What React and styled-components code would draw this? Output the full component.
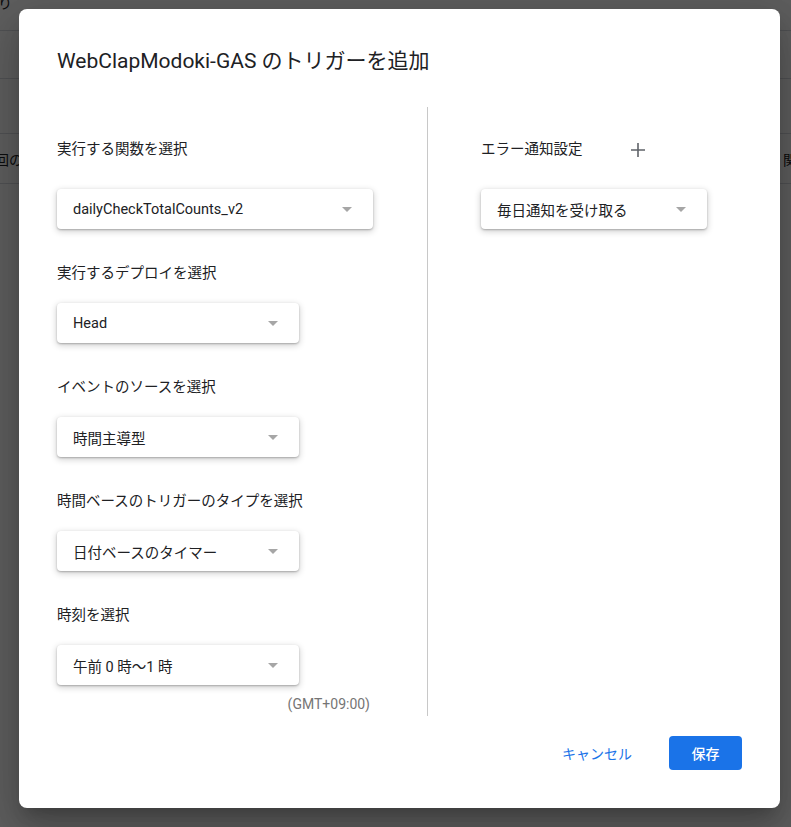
import React from "react";
import styled, { createGlobalStyle } from "styled-components";

const GlobalStyle = createGlobalStyle`
  html, body {
    margin: 0;
    padding: 0;
    height: 100%;
    overflow: hidden;
    background: #ffffff;
    font-family: Roboto, "Noto Sans CJK JP", sans-serif;
  }
  #root {
    height: 100%;
  }
`;

// 背景のページ (モーダルの下に見える部分)
const Page = styled.div`
  position: relative;
  height: 100%;
  overflow: hidden;
  background: #ffffff;
`;

const PageRow = styled.div`
  height: ${(p) => p.h}px;
  border-bottom: 1px solid #dadce0;
  box-sizing: border-box;
  display: flex;
  align-items: center;
  justify-content: space-between;
  font-size: 14px;
  color: #202124;
  white-space: nowrap;
`;

const PageText = styled.span`
  margin-left: ${(p) => p.offset || 0}px;
  margin-right: ${(p) => p.right || 0}px;
  margin-top: ${(p) => p.top || 0}px;
`;

const Backdrop = styled.div`
  position: absolute;
  inset: 0;
  background: rgba(0, 0, 0, 0.63);
  display: flex;
  align-items: flex-start;
  padding: 9px 11px 19px 19px;
`;

const Dialog = styled.div`
  width: 761px;
  box-sizing: border-box;
  background: #ffffff;
  border-radius: 8px;
  box-shadow: 0 11px 15px -7px rgba(0, 0, 0, 0.2), 0 24px 38px 3px rgba(0, 0, 0, 0.14),
    0 9px 46px 8px rgba(0, 0, 0, 0.12);
  padding: 38px;
  display: flex;
  flex-direction: column;
`;

const Title = styled.h2`
  margin: 0;
  font-size: 21px;
  line-height: 28px;
  font-weight: 400;
  color: #202124;
`;

const Columns = styled.div`
  margin-top: 32px;
  display: grid;
  grid-template-columns: 370px 1px 1fr;
`;

const Column = styled.div`
  padding: 33px 0 4px ${(p) => (p.right ? 53 : 0)}px;
  display: flex;
  flex-direction: column;
  align-items: flex-start;
`;

const Divider = styled.div`
  background: #c8c8c8;
`;

const Field = styled.div`
  display: flex;
  flex-direction: column;
  align-items: flex-start;
  margin-bottom: ${(p) => (p.last ? 0 : 35)}px;
`;

const LabelRow = styled.div`
  display: flex;
  align-items: center;
  height: 20px;
  margin-bottom: ${(p) => (p.first ? 29 : 19)}px;
`;

const Label = styled.div`
  font-size: 14.5px;
  line-height: 20px;
  color: #202124;
  white-space: nowrap;
`;

const AddButton = styled.button`
  border: none;
  background: none;
  padding: 0;
  margin-left: ${(p) => p.gap}px;
  width: 16px;
  height: 16px;
  display: flex;
  align-items: center;
  justify-content: center;
  cursor: pointer;
`;

const Select = styled.div`
  width: ${(p) => p.w}px;
  height: 40px;
  box-sizing: border-box;
  border-radius: 4px;
  background: #ffffff;
  box-shadow: 0 1px 2px rgba(0, 0, 0, 0.25), 0 2px 6px 1px rgba(0, 0, 0, 0.16);
  display: flex;
  align-items: center;
  justify-content: space-between;
  padding: 0 21px 0 16px;
  font-size: 14.5px;
  color: #202124;
  white-space: nowrap;
`;

const Arrow = styled.span`
  width: 0;
  height: 0;
  border-left: 5px solid transparent;
  border-right: 5px solid transparent;
  border-top: 5px solid #a6a6a6;
`;

const Timezone = styled.div`
  margin-top: 11px;
  padding-right: 1px;
  text-align: right;
  width: 313px;
  font-size: 14px;
  line-height: 16px;
  color: #757575;
`;

const Footer = styled.div`
  margin-top: 20px;
  display: flex;
  justify-content: flex-end;
  align-items: center;
  gap: 21px;
`;

const TextButton = styled.button`
  height: 34px;
  border: none;
  background: none;
  padding: 0 16px;
  font-family: inherit;
  font-size: 14px;
  color: #1a73e8;
  cursor: pointer;
`;

const PrimaryButton = styled.button`
  width: 73px;
  height: 34px;
  border: none;
  border-radius: 4px;
  background: #1a73e8;
  font-family: inherit;
  font-size: 14px;
  font-weight: 500;
  color: #ffffff;
  cursor: pointer;
`;

const PlusIcon = () => (
  <svg width="14" height="14" viewBox="0 0 14 14">
    <path d="M7 0v14M0 7h14" stroke="#5f6368" strokeWidth="1.6" />
  </svg>
);

const leftFields = [
  { label: "実行する関数を選択", value: "dailyCheckTotalCounts_v2", w: 316 },
  { label: "実行するデプロイを選択", value: "Head", w: 242 },
  { label: "イベントのソースを選択", value: "時間主導型", w: 242 },
  { label: "時間ベースのトリガーのタイプを選択", value: "日付ベースのタイマー", w: 242 },
  { label: "時刻を選択", value: "午前 0 時～1 時", w: 242 },
];

const App = () => {
  return (
    <>
      <GlobalStyle />
      <Page>
        <PageRow h={31}>
          <PageText offset={-2} top={-26}>
            り
          </PageText>
        </PageRow>
        <PageRow h={48} />
        <PageRow h={55} />
        <PageRow h={50}>
          <PageText offset={-5}>回の実行</PageText>
          <PageText right={-20}>関数</PageText>
        </PageRow>
        <Backdrop>
          <Dialog>
            <Title>WebClapModoki-GAS のトリガーを追加</Title>
            <Columns>
              <Column>
                {leftFields.map((f, i) => (
                  <Field key={f.label} last={i === leftFields.length - 1}>
                    <LabelRow first={i === 0}>
                      <Label>{f.label}</Label>
                    </LabelRow>
                    <Select w={f.w}>
                      <span>{f.value}</span>
                      <Arrow />
                    </Select>
                  </Field>
                ))}
                <Timezone>(GMT+09:00)</Timezone>
              </Column>
              <Divider />
              <Column right>
                <Field last>
                  <LabelRow first>
                    <Label>エラー通知設定</Label>
                    <AddButton gap={47} aria-label="追加">
                      <PlusIcon />
                    </AddButton>
                  </LabelRow>
                  <Select w={226}>
                    <span>毎日通知を受け取る</span>
                    <Arrow />
                  </Select>
                </Field>
              </Column>
            </Columns>
            <Footer>
              <TextButton>キャンセル</TextButton>
              <PrimaryButton>保存</PrimaryButton>
            </Footer>
          </Dialog>
        </Backdrop>
      </Page>
    </>
  );
};

export default App;
